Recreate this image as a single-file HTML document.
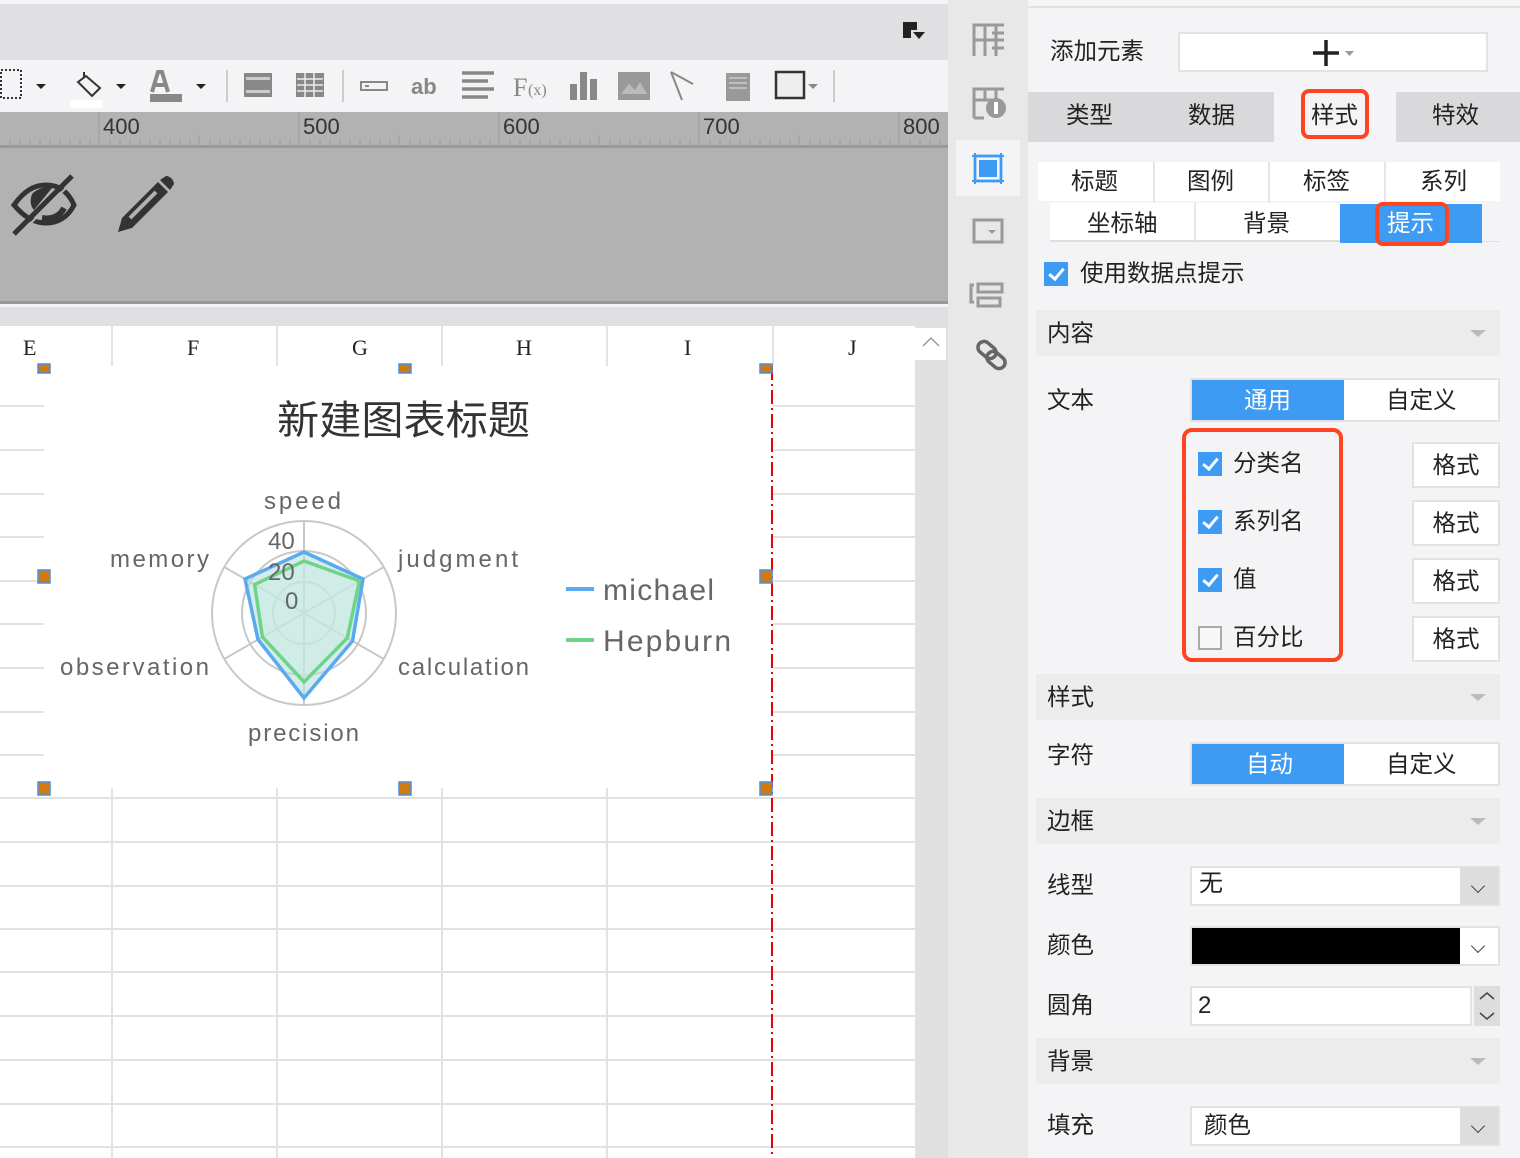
<!DOCTYPE html>
<html><head><meta charset="utf-8">
<style>
*{margin:0;padding:0;box-sizing:border-box}
body{width:1520px;height:1158px;overflow:hidden;position:relative;background:#f4f4f6;font-family:"Liberation Sans","Noto Sans CJK SC",sans-serif;color:#222}
.a{position:absolute}
.t{position:absolute;font-size:23.5px;line-height:1;white-space:nowrap}
.sec{position:absolute;left:1036px;width:464px;height:46px;background:#ececec}
.sec .t{left:11px;top:12px}
.tri{position:absolute;right:14px;top:20px;width:0;height:0;border-left:8px solid transparent;border-right:8px solid transparent;border-top:7px solid #bbb}
.box{position:absolute;background:#fff;border:2px solid #e2e2e2}
.cb{position:absolute;width:24px;height:24px;background:#3d9bf3}
.cb:after{content:"";position:absolute;left:8px;top:3px;width:6px;height:12px;border:solid #fff;border-width:0 3px 3px 0;transform:rotate(40deg)}
.btn{position:absolute;left:1412px;width:88px;height:46px;background:#fff;border:2px solid #e2e2e2;font-size:23.5px;text-align:center;line-height:42px}
.dd{position:absolute;right:0;top:0;width:38px;height:100%;background:#ddd}
.dd:after{content:"";position:absolute;left:13px;top:13px;width:9px;height:9px;border:solid #444;border-width:0 1.5px 1.5px 0;transform:rotate(45deg)}
</style></head><body>
<div class="a" style="left:0;top:0;width:948px;height:4px;background:#f4f4f6"></div>
<div class="a" style="left:0;top:4px;width:948px;height:56px;background:#e0e0e2"></div>
<svg class="a" style="left:900px;top:20px" width="28" height="22"><rect x="3" y="2" width="8" height="16" fill="#222"/><rect x="3" y="2" width="14" height="8" fill="#222"/><path d="M13 12h12l-6 7z" fill="#222"/></svg>
<div class="a" style="left:0;top:60px;width:948px;height:52px;background:#f4f4f6"></div>
<svg class="a" style="left:0;top:60px" width="948" height="52">
<g fill="none" stroke="#333" stroke-width="2" stroke-dasharray="2 2"><rect x="1" y="10" width="20" height="28"/></g>
<path d="M36 24h10l-5 5z M116 24h10l-5 5z M196 24h10l-5 5z" fill="#222"/>
<path d="M84 12v6 M78 22l8-6 14 12-8 8z" fill="none" stroke="#333" stroke-width="2"/><rect x="70" y="40" width="32" height="8" fill="#fff"/>
<path d="M152 32l6-20h4l6 20 M155 25h10" stroke="#888" stroke-width="4" fill="none"/><rect x="150" y="34" width="32" height="8" fill="#888"/>
<rect x="226" y="10" width="2" height="32" fill="#ccc"/><rect x="342" y="10" width="2" height="32" fill="#ccc"/><rect x="833" y="10" width="2" height="32" fill="#ccc"/>
<rect x="244" y="13" width="28" height="24" fill="#888"/><rect x="246" y="17" width="24" height="3" fill="#ccc"/><rect x="246" y="30" width="24" height="3" fill="#ccc"/>
<rect x="296" y="13" width="28" height="24" fill="#888"/><path d="M297 19h26M297 25h26M297 31h26M305 13v24M314 13v24" stroke="#eee" stroke-width="1.5"/>
<rect x="361" y="22" width="26" height="8" fill="none" stroke="#888" stroke-width="2"/><rect x="365" y="25" width="4" height="2" fill="#888"/>
<text x="411" y="34" font-size="22" font-weight="bold" fill="#888" font-family="Liberation Sans">ab</text>
<path d="M462 13h32M462 21h26M462 29h32M462 37h26" stroke="#888" stroke-width="3.5"/>
<text x="513" y="36" font-size="26" fill="#888" font-family="Liberation Serif">F</text><text x="528" y="35" font-size="16" fill="#888" font-family="Liberation Serif">(x)</text>
<path d="M570 24h7v16h-7z M580 12h7v28h-7z M590 19h7v21h-7z" fill="#888"/>
<rect x="618" y="12" width="32" height="28" fill="#999"/><path d="M621 34l8-10 6 6 5-8 7 12z" fill="#bbb"/>
<path d="M671 12l11 28 M671 12l22 12" stroke="#888" stroke-width="2"/>
<rect x="726" y="13" width="24" height="28" fill="#999"/><path d="M729 18h18M729 23h18M729 28h18" stroke="#ccc" stroke-width="1.5"/>
<rect x="776" y="12" width="28" height="26" fill="#eee" stroke="#333" stroke-width="2.5"/><path d="M808 24h10l-5 5z" fill="#888"/>
</svg>
<div class="a" style="left:0;top:112px;width:948px;height:36px;background:#b2b2b2;border-bottom:3px solid #999"></div>
<svg class="a" style="left:0;top:112px" width="948" height="36">
<g stroke="#999" stroke-width="1">
<path d="M10 33v-6M20 33v-6M30 33v-6M40 33v-6M50 33v-6M60 33v-6M70 33v-6M80 33v-6M90 33v-6M110 33v-6M120 33v-6M130 33v-6M140 33v-6M150 33v-6M160 33v-6M170 33v-6M180 33v-6M190 33v-6M210 33v-6M220 33v-6M230 33v-6M240 33v-6M250 33v-6M260 33v-6M270 33v-6M280 33v-6M290 33v-6M310 33v-6M320 33v-6M330 33v-6M340 33v-6M350 33v-6M360 33v-6M370 33v-6M380 33v-6M390 33v-6M410 33v-6M420 33v-6M430 33v-6M440 33v-6M450 33v-6M460 33v-6M470 33v-6M480 33v-6M490 33v-6M510 33v-6M520 33v-6M530 33v-6M540 33v-6M550 33v-6M560 33v-6M570 33v-6M580 33v-6M590 33v-6M610 33v-6M620 33v-6M630 33v-6M640 33v-6M650 33v-6M660 33v-6M670 33v-6M680 33v-6M690 33v-6M710 33v-6M720 33v-6M730 33v-6M740 33v-6M750 33v-6M760 33v-6M770 33v-6M780 33v-6M790 33v-6M810 33v-6M820 33v-6M830 33v-6M840 33v-6M850 33v-6M860 33v-6M870 33v-6M880 33v-6M890 33v-6M910 33v-6M920 33v-6M930 33v-6M940 33v-6"/>
<path d="M99 33v-33M299 33v-33M499 33v-33M699 33v-33M899 33v-33M199 33v-10M399 33v-10M599 33v-10M799 33v-10"/>
</g>
<g font-size="22" fill="#333" font-family="Liberation Sans"><text x="103" y="22">400</text><text x="303" y="22">500</text><text x="503" y="22">600</text><text x="703" y="22">700</text><text x="903" y="22">800</text></g>
</svg>
<div class="a" style="left:0;top:148px;width:948px;height:156px;background:#b2b2b2;border-bottom:3px solid #999"></div>
<svg class="a" style="left:0;top:160px" width="200" height="90">
<path d="M14 45c10-14 20-20 32-20s22 6 28 20c-6 12-16 18-28 18s-22-6-32-18z" fill="none" stroke="#333" stroke-width="5"/>
<path d="M32 34c6-6 14-8 20-6l-18 22c-4-4-4-10-2-16z" fill="#333"/><path d="M42 58c10 2 18-2 22-10" stroke="#333" stroke-width="6" fill="none"/>
<path d="M14 74l58-58" stroke="#333" stroke-width="5"/><path d="M14 74l58-58" stroke="#b2b2b2" stroke-width="2" transform="translate(4 2)"/>
<path d="M118 72l4-14 36-36 10 10-36 36z" fill="#333"/><path d="M130 58l26-26" stroke="#b2b2b2" stroke-width="4"/><path d="M160 20l6-4c4 0 8 4 8 8l-4 6z" fill="#333"/>
</svg>
<div class="a" style="left:0;top:307px;width:948px;height:19px;background:#e0e0e2"></div>
<div class="a" style="left:0;top:326px;width:915px;height:832px;background:#fff"></div>
<svg class="a" style="left:0;top:326px" width="915" height="832">
<g stroke="#e2e2e2" stroke-width="2">
<path d="M112 0v40M277 0v40M442 0v40M607 0v40M773 0v40"/>
<path d="M0 80h44M0 124h44M0 168h44M0 211h44M0 255h44M0 298h44M0 342h44M0 386h44M0 429h44"/>
<path d="M773 80h142M773 124h142M773 168h142M773 211h142M773 255h142M773 298h142M773 342h142M773 386h142M773 429h142"/>
<path d="M0 472h915M0 516h915M0 560h915M0 603h915M0 646h915M0 690h915M0 734h915M0 778h915M0 821h915"/>
<path d="M112 462v370M277 462v370M442 462v370M607 462v370"/>
</g>
<g font-size="22" fill="#222" font-family="Liberation Serif"><text x="23" y="29">E</text><text x="187" y="29">F</text><text x="352" y="29">G</text><text x="516" y="29">H</text><text x="684" y="29">I</text><text x="848" y="29">J</text></g>
<path d="M772 40v792" stroke="#e00" stroke-width="2" stroke-dasharray="14 4 2 4"/>
<g fill="#d07a10" stroke="#4a90e2" stroke-width="1.5">
<rect x="38" y="38" width="12" height="9"/><rect x="399" y="38" width="12" height="9"/><rect x="760" y="38" width="12" height="9"/>
<rect x="38" y="244" width="12" height="13"/><rect x="760" y="244" width="12" height="13"/>
<rect x="38" y="456" width="12" height="13"/><rect x="399" y="456" width="12" height="13"/><rect x="760" y="456" width="12" height="13"/>
</g>
</svg>
<div class="a" style="left:915px;top:326px;width:33px;height:832px;background:#e0e0e0"></div>
<div class="a" style="left:915px;top:328px;width:31px;height:32px;background:#fff"></div>
<svg class="a" style="left:920px;top:334px" width="22" height="16"><path d="M3 12l8-8 8 8" fill="none" stroke="#999" stroke-width="1.5"/></svg>
<svg class="a" style="left:0;top:0" width="948" height="800">
<text x="277" y="434" font-size="40" fill="#333" textLength="253" lengthAdjust="spacingAndGlyphs" font-family="Liberation Sans, Noto Sans CJK SC, sans-serif">新建图表标题</text>
<g fill="none" stroke="#c8c8c8" stroke-width="2">
<circle cx="304" cy="613" r="92"/><circle cx="304" cy="613" r="62"/><circle cx="304" cy="613" r="31"/>
<path d="M304 521v184M224.3 567l159.4 92M224.3 659l159.4-92"/>
</g>
<polygon points="304,552 363,579 352.5,641 304,698 258,639.5 245,579" fill="#b9e0dc" fill-opacity="0.6" stroke="#5aaaf0" stroke-width="3.5"/>
<polygon points="304,561 359.4,581 347.3,638 304,682 262.4,637 254.6,584.5" fill="#c9ebe2" fill-opacity="0.5" stroke="#6dd48a" stroke-width="3.5"/>
<g font-size="24" fill="#666" font-family="Liberation Sans" lengthAdjust="spacingAndGlyphs">
<text x="268" y="549">40</text><text x="268" y="580">20</text><text x="285" y="609">0</text>
<text x="264" y="509" textLength="77">speed</text><text x="110" y="567" textLength="99">memory</text><text x="398" y="567" textLength="120">judgment</text>
<text x="60" y="675" textLength="149">observation</text><text x="398" y="675" textLength="131">calculation</text><text x="248" y="741" textLength="111">precision</text>
<text x="603" y="600" font-size="30" textLength="111">michael</text><text x="603" y="651" font-size="30" textLength="128">Hepburn</text>
</g>
<rect x="566" y="587" width="28" height="4" fill="#5aaaf0"/><rect x="566" y="638" width="28" height="4" fill="#6dd48a"/>
</svg>
<div class="a" style="left:948px;top:0;width:80px;height:1158px;background:#e8e8e8"></div>
<div class="a" style="left:956px;top:140px;width:64px;height:56px;background:#f4f4f6"></div>
<svg class="a" style="left:948px;top:0" width="80" height="400">
<g fill="none" stroke="#999" stroke-width="3">
<path d="M26 56V25h30M26 40h30M37 25v31M48 25v31M44 33h12M44 48h12"/>
<path d="M26 118V89h30M26 100h20M26 118h10M37 89v10M48 89v10"/>
<rect x="26" y="220" width="28" height="22"/><rect x="30" y="284" width="24" height="8"/><rect x="30" y="298" width="22" height="8"/><path d="M26 285h-3v17h3"/>
</g>
<circle cx="48" cy="108" r="10" fill="#999"/><rect x="46" y="102" width="4" height="12" fill="#fff"/>
<path d="M40 230h8l-4 4z" fill="#999"/>
<rect x="27" y="156" width="26" height="25" fill="none" stroke="#6bb0f5" stroke-width="3"/><rect x="31" y="160" width="18" height="17" fill="#3d9bf3"/>
<path d="M24 156h32M24 181h32M27 153v31M53 153v31" stroke="#3d9bf3" stroke-width="2"/>
<g fill="none" stroke="#666" stroke-width="3.5"><rect x="29" y="344" width="20" height="12" rx="6" transform="rotate(40 39 350)"/><rect x="38" y="354" width="20" height="12" rx="6" transform="rotate(40 48 360)"/></g>
</svg>
<div class="a" style="left:1028px;top:0;width:492px;height:8px;border-bottom:2px solid #e0e0e0;background:#f4f4f6"></div>
<div class="t" style="left:1050px;top:40px">添加元素</div>
<div class="box" style="left:1178px;top:32px;width:310px;height:40px"></div>
<svg class="a" style="left:1310px;top:37px" width="50" height="30"><path d="M16 3v26M3 16h26" stroke="#222" stroke-width="3.5"/><path d="M35 14h9l-4.5 5z" fill="#999"/></svg>
<div class="a" style="left:1028px;top:92px;width:246px;height:50px;background:#d9d9db"></div>
<div class="a" style="left:1396px;top:92px;width:124px;height:50px;background:#d9d9db"></div>
<div class="t" style="left:1066px;top:104px">类型</div>
<div class="t" style="left:1188px;top:104px">数据</div>
<div class="t" style="left:1311px;top:104px">样式</div>
<div class="a" style="left:1301px;top:89px;width:68px;height:50px;border:4px solid #ff4422;border-radius:8px"></div>
<div class="t" style="left:1432px;top:104px">特效</div>
<div class="a" style="left:1038px;top:162px;width:462px;height:80px;background:#fff;border-bottom:2px solid #ddd"></div>
<div class="a" style="left:1038px;top:201px;width:462px;height:2px;background:#f4f4f6"></div>
<div class="a" style="left:1153px;top:162px;width:2px;height:40px;background:#e6e6e6"></div>
<div class="a" style="left:1268px;top:162px;width:2px;height:40px;background:#e6e6e6"></div>
<div class="a" style="left:1384px;top:162px;width:2px;height:40px;background:#e6e6e6"></div>
<div class="a" style="left:1038px;top:203px;width:12px;height:40px;background:#f4f4f6"></div>
<div class="a" style="left:1194px;top:203px;width:2px;height:40px;background:#e6e6e6"></div>
<div class="a" style="left:1482px;top:203px;width:18px;height:38px;background:#f4f4f6"></div>
<div class="a" style="left:1340px;top:204px;width:142px;height:39px;background:#3d9bf3"></div>
<div class="t" style="left:1071px;top:170px">标题</div>
<div class="t" style="left:1187px;top:170px">图例</div>
<div class="t" style="left:1303px;top:170px">标签</div>
<div class="t" style="left:1420px;top:170px">系列</div>
<div class="t" style="left:1087px;top:212px">坐标轴</div>
<div class="t" style="left:1243px;top:212px">背景</div>
<div class="t" style="left:1387px;top:212px;color:#fff">提示</div>
<div class="a" style="left:1375px;top:202px;width:74px;height:44px;border:4px solid #ff4422;border-radius:8px"></div>
<div class="cb" style="left:1044px;top:262px"></div>
<div class="t" style="left:1080px;top:262px">使用数据点提示</div>
<div class="sec" style="top:310px"><div class="t">内容</div><div class="tri"></div></div>
<div class="t" style="left:1047px;top:389px">文本</div>
<div class="box" style="left:1190px;top:378px;width:310px;height:44px"></div>
<div class="a" style="left:1192px;top:380px;width:152px;height:40px;background:#3d9bf3"></div>
<div class="t" style="left:1244px;top:389px;color:#fff">通用</div>
<div class="t" style="left:1386px;top:389px">自定义</div>
<div class="a" style="left:1182px;top:428px;width:161px;height:234px;border:4px solid #ff4422;border-radius:10px"></div>
<div class="cb" style="left:1198px;top:452px"></div><div class="t" style="left:1233px;top:452px">分类名</div>
<div class="cb" style="left:1198px;top:510px"></div><div class="t" style="left:1233px;top:510px">系列名</div>
<div class="cb" style="left:1198px;top:568px"></div><div class="t" style="left:1233px;top:568px">值</div>
<div class="a" style="left:1198px;top:626px;width:24px;height:24px;border:2px solid #aaa;background:#f7f7f7"></div><div class="t" style="left:1233px;top:626px">百分比</div>
<div class="btn" style="top:442px">格式</div>
<div class="btn" style="top:500px">格式</div>
<div class="btn" style="top:558px">格式</div>
<div class="btn" style="top:616px">格式</div>
<div class="sec" style="top:674px"><div class="t">样式</div><div class="tri"></div></div>
<div class="t" style="left:1047px;top:744px">字符</div>
<div class="box" style="left:1190px;top:742px;width:310px;height:44px"></div>
<div class="a" style="left:1192px;top:744px;width:152px;height:40px;background:#3d9bf3"></div>
<div class="t" style="left:1246px;top:753px;color:#fff">自动</div>
<div class="t" style="left:1386px;top:753px">自定义</div>
<div class="sec" style="top:798px"><div class="t">边框</div><div class="tri"></div></div>
<div class="t" style="left:1047px;top:874px">线型</div>
<div class="box" style="left:1190px;top:866px;width:310px;height:40px"><div class="dd"></div></div>
<div class="t" style="left:1199px;top:872px;font-size:24px">无</div>
<div class="t" style="left:1047px;top:934px">颜色</div>
<div class="box" style="left:1190px;top:926px;width:310px;height:40px;background:#000"><div class="dd" style="background:#fff;width:38px"></div></div>
<div class="t" style="left:1047px;top:994px">圆角</div>
<div class="box" style="left:1190px;top:986px;width:282px;height:40px"></div>
<div class="t" style="left:1198px;top:994px;font-size:24px">2</div>
<div class="a" style="left:1474px;top:986px;width:26px;height:40px;background:#ddd"></div>
<svg class="a" style="left:1474px;top:986px" width="26" height="40"><path d="M6 13l7-6 7 6M6 27l7 6 7-6" fill="none" stroke="#444" stroke-width="1.5"/></svg>
<div class="sec" style="top:1038px"><div class="t">背景</div><div class="tri"></div></div>
<div class="t" style="left:1047px;top:1114px">填充</div>
<div class="box" style="left:1190px;top:1106px;width:310px;height:40px"><div class="dd"></div></div>
<div class="t" style="left:1204px;top:1114px">颜色</div>
</body></html>
